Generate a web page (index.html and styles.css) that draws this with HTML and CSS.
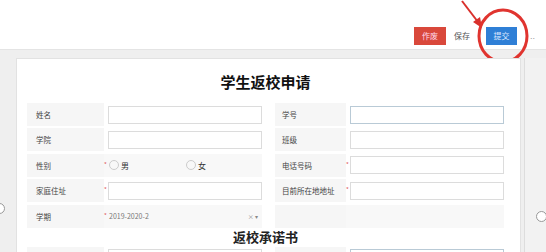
FILE: index.html
```html
<!DOCTYPE html>
<html lang="zh-CN">
<head>
    <meta charset="UTF-8">
    <title>学生返校申请</title>
    <link rel="stylesheet" href="styles.css">
</head>
<body>
    <div class="toolbar">
        <div class="actions">
            <button class="btn btn-void">作废</button>
            <button class="btn btn-save">保存</button>
            <button class="btn btn-submit">提交</button>
            <span class="more">..</span>
        </div>
        <svg class="mark" width="80" height="70" viewBox="0 0 80 70">
            <line x1="2" y1="1" x2="18" y2="22" stroke="#d9302c" stroke-width="2"/>
            <polygon points="22,28 13,22 20,17" fill="#d9302c"/>
            <ellipse cx="43" cy="36" rx="24" ry="26" fill="none" stroke="#e0342f" stroke-width="3"/>
        </svg>
    </div>

    <div class="workspace">
        <span class="edge-dot left"></span>
        <div class="sheet">
            <h1 class="sheet-title">学生返校申请</h1>
            <div class="form-grid">
                <div class="label">姓名</div>
                <div class="value"><span class="field"></span></div>
                <div class="label">学号</div>
                <div class="value"><span class="field focus"></span></div>

                <div class="label">学院</div>
                <div class="value"><span class="field"></span></div>
                <div class="label">班级</div>
                <div class="value"><span class="field"></span></div>

                <div class="label">性别</div>
                <div class="value shaded">
                    <span class="req">*</span>
                    <span class="radio"></span><span class="opt">男</span>
                    <span class="radio second"></span><span class="opt">女</span>
                </div>
                <div class="label">电话号码</div>
                <div class="value"><span class="req">*</span><span class="field"></span></div>

                <div class="label">家庭住址</div>
                <div class="value"><span class="req">*</span><span class="field"></span></div>
                <div class="label">目前所在地地址</div>
                <div class="value"><span class="req">*</span><span class="field"></span></div>

                <div class="label">学期</div>
                <div class="value shaded">
                    <span class="req">*</span>
                    <span class="select-text">2019-2020-2</span>
                    <span class="select-icons">× ▾</span>
                </div>
                <div class="label"></div>
                <div class="value shaded"></div>
            </div>
            <h2 class="section-title">返校承诺书</h2>
            <div class="form-grid">
                <div class="label"></div>
                <div class="value"><span class="field"></span></div>
                <div class="label"></div>
                <div class="value"><span class="field focus"></span></div>
            </div>
        </div>
        <div class="scroll-rail">
            <span class="edge-dot right"></span>
        </div>
    </div>
</body>
</html>
```

FILE: styles.css
```css
* {
    margin: 0;
    padding: 0;
    box-sizing: border-box;
}

body {
    width: 546px;
    height: 252px;
    overflow: hidden;
    background: #efefef;
    font-family: "Noto Sans CJK SC", "Liberation Sans", sans-serif;
    color: #444;
}

/* Top bar */
.toolbar {
    position: relative;
    height: 50px;
    background: #fff;
    border-bottom: 1px solid #e4e4e4;
    display: flex;
    justify-content: flex-end;
    padding: 27px 10px 0 0;
}

.actions {
    display: flex;
    align-items: center;
    height: 18px;
}

.btn {
    height: 18px;
    border: none;
    font-family: inherit;
    font-size: 8px;
    line-height: 18px;
    padding: 0;
}

.btn-void {
    width: 32px;
    background: #d9483b;
    color: #fde;
}

.btn-save {
    width: 30px;
    margin-left: 1px;
    background: #fff;
    color: #555;
}

.btn-submit {
    width: 31px;
    margin-left: 9px;
    background: #2f7fd6;
    color: #dde9ff;
}

.more {
    margin-left: 13px;
    width: 6px;
    font-family: "Liberation Sans", sans-serif;
    font-size: 9px;
    line-height: 9px;
    color: #999;
}

.mark {
    position: absolute;
    left: 460px;
    top: 0;
    overflow: visible;
}

/* Work area */
.workspace {
    position: relative;
    display: flex;
    height: 202px;
    overflow: hidden;
    padding: 8px 0 0 16px;
}

.edge-dot {
    position: absolute;
    width: 11px;
    height: 11px;
    border: 1px solid #999;
    border-radius: 50%;
    background: #fff;
}

.edge-dot.left {
    left: -6px;
    top: 153px;
}

.edge-dot.right {
    left: 11px;
    top: 153px;
}

.sheet {
    width: 505px;
    background: #fff;
    border: 1px solid #e2e2e2;
    border-bottom: none;
    padding: 0 16px 0 10px;
}

.sheet-title {
    text-align: center;
    font-size: 15px;
    font-weight: 700;
    color: #111;
    line-height: 20px;
    margin: 13px 0 11px;
}

.section-title {
    text-align: center;
    font-size: 13px;
    font-weight: 700;
    color: #222;
    line-height: 18px;
    margin: 0 0 1px;
}

.scroll-rail {
    position: relative;
    width: 25px;
    border-left: 1px solid #ddd;
    margin-left: 3px;
    background: #f2f2f2;
}

/* Form */
.form-grid {
    display: grid;
    grid-template-columns: 77px 158px 84px 158px;
    grid-auto-rows: 23px;
    row-gap: 2.4px;
}

.label {
    background: #f6f6f6;
    font-size: 7.5px;
    line-height: 23px;
    padding-left: 9px;
    color: #444;
}

.form-grid .label:nth-child(4n+3) {
    margin-left: 13px;
    padding-left: 7px;
}

.value {
    display: flex;
    align-items: center;
    padding-left: 4px;
    position: relative;
}

.value.shaded {
    background: #f8f8f8;
}

.field {
    flex: 1;
    height: 18px;
    border: 1px solid #dcdcdc;
    background: #fff;
}

.field.focus {
    border-color: #b9cad6;
}

.req {
    position: absolute;
    left: 0;
    top: 8px;
    font-size: 6px;
    line-height: 6px;
    color: #e05555;
}

.radio {
    width: 10px;
    height: 10px;
    border: 1px solid #ccc;
    border-radius: 50%;
    margin-left: 1px;
}

.radio.second {
    margin-left: 57px;
}

.opt {
    font-size: 8px;
    margin-left: 2px;
    color: #333;
}

.select-text {
    flex: 1;
    font-size: 7px;
    color: #777;
    padding-left: 1px;
}

.select-icons {
    font-size: 6px;
    color: #888;
    margin-right: 4px;
}
```
